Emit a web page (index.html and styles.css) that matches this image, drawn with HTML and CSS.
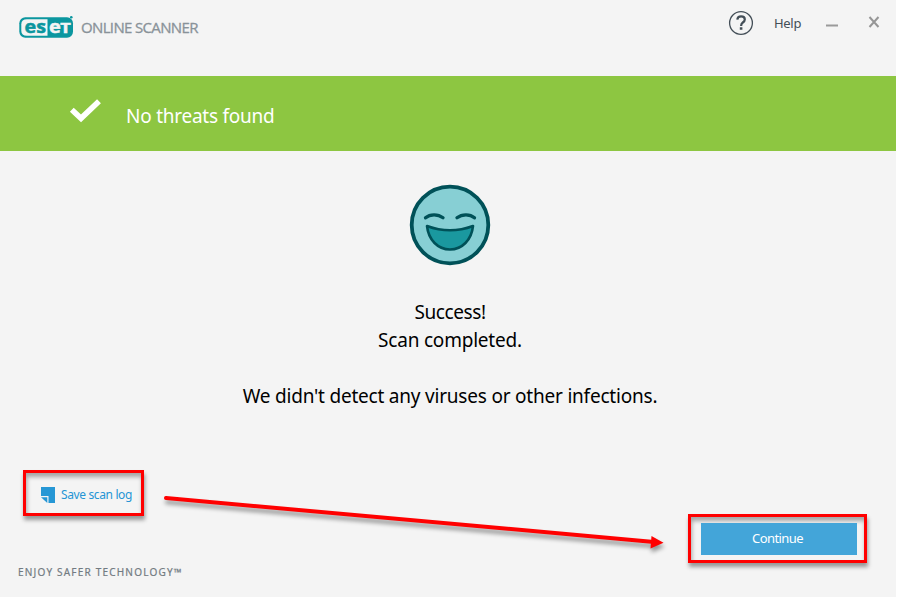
FILE: index.html
```html
<!DOCTYPE html>
<html lang="en">
<head>
<meta charset="utf-8">
<title>ESET Online Scanner</title>
<link rel="stylesheet" href="styles.css">
</head>
<body>
<div class="window">
  <header class="header">
    <svg class="logo" width="56" height="24" viewBox="0 0 56 24" role="img" aria-label="ESET">
      <rect x="0.300" y="2.300" width="53.700" height="20.400" rx="6" fill="#0b969f"/>
      <path d="M8 4.300h20.500v16.400H8q-5.700 0-5.700-5V9.300q0-5 5.700-5z" fill="#f4f4f4"/>
      <circle cx="52.300" cy="2.200" r="1.300" fill="#0b969f"/>
      <text class="logo-text dark" x="5.500" y="17.500" textLength="21.500" lengthAdjust="spacingAndGlyphs">es</text>
      <text class="logo-text light" x="30" y="17.500" textLength="11.800" lengthAdjust="spacingAndGlyphs">e</text>
      <text class="logo-text logo-cap light" x="41.300" y="17.500" textLength="10.500" lengthAdjust="spacingAndGlyphs">T</text>
    </svg>
    <span class="product">ONLINE SCANNER</span>
    <svg class="help-icon" width="26" height="26" viewBox="0 0 26 26" fill="none" stroke="#434e57">
      <circle cx="13" cy="13" r="11.400" stroke-width="1.300"/>
      <path d="M9.300 9.700C9.500 7.300 11 6.300 13.100 6.300c2.200 0 3.700 1.200 3.700 3.100 0 1.500-.9 2.300-2 3.100-1.200.9-1.700 1.600-1.700 3.400" stroke-width="2.200"/>
      <path d="M11.800 18.500h2.600" stroke-width="2.500"/>
    </svg>
    <span class="help">Help</span>
    <svg class="minimize" width="12" height="12" viewBox="0 0 12 12"><path d="M0 10.500h12" stroke="#9a9a9a" stroke-width="2"/></svg>
    <svg class="close" width="12" height="12" viewBox="0 0 12 12"><path d="M1.500 1l9 10M10.500 1l-9 10" stroke="#969696" stroke-width="2"/></svg>
  </header>

  <section class="banner">
    <svg class="check" width="32" height="26" viewBox="0 0 32 26"><path d="M2.800 11.800L12 20.300 30 3.200" fill="none" stroke="#fff" stroke-width="5.600"/></svg>
    <span class="banner-text">No threats found</span>
  </section>

  <main class="result">
    <svg class="face" width="82" height="82" viewBox="0 0 82 82" fill="none" stroke="#005158" stroke-linecap="round" stroke-linejoin="round">
      <circle cx="41" cy="41" r="38.300" fill="#87cfd4" stroke-width="3.800"/>
      <path d="M16.500 33.800C21 29.800 29 29.800 34 33.800M48 33.800C53 29.800 61 29.800 65.500 33.800" stroke-width="3.300"/>
      <path d="M18 42q23 8.500 46 0C62.500 56 53 65.500 41 65.500S19.500 56 18 42z" fill="#1a989f" stroke-width="2.600"/>
    </svg>
    <p class="line success">Success!</p>
    <p class="line completed">Scan completed.</p>
    <p class="line detail">We didn't detect any viruses or other infections.</p>
  </main>

  <div class="actions">
    <div class="highlight save-box">
      <svg width="14" height="16" viewBox="0 0 14 16"><path d="M0 0h14v16H7.500V9H0z" fill="#2697d5"/><path d="M0 10.200h6.300V16z" fill="#2697d5"/></svg>
      <a class="save-link">Save scan log</a>
    </div>
    <div class="highlight continue-box">
      <button class="continue"><span class="continue-label">Continue</span></button>
    </div>
  </div>

  <footer class="footer"><span class="tagline">ENJOY SAFER TECHNOLOGY™</span></footer>

  <svg class="arrow" width="510" height="70" viewBox="0 0 510 70">
    <path d="M6 8L494 52" stroke="#f00" stroke-width="4" stroke-linecap="round"/>
    <path d="M491.500 46L503.500 52.800 490.500 58.500z" fill="#f00"/>
  </svg>
</div>
</body>
</html>
```
FILE: styles.css
```css
* { box-sizing: border-box; }

body {
  margin: 0;
  background: #fff;
  font-family: "Noto Sans", "Open Sans", sans-serif;
}

.window {
  position: relative;
  width: 896px;
  height: 597px;
  background: #f4f4f4;
}

.header {
  display: flex;
  align-items: flex-start;
  height: 76px;
  padding-left: 19px;
  white-space: nowrap;
}

.logo { margin-top: 15px; flex: none; }

.logo-text {
  font: bold 18px "Open Sans", sans-serif;
  stroke-width: 0.5px;
}

.logo-cap { font-size: 14px; }
.dark { fill: #0b969f; stroke: #0b969f; }
.light { fill: #f4f4f4; stroke: #f4f4f4; }

.product {
  width: 119px;
  margin: 17px 0 0 6px;
  font: 15px/21px "Open Sans", sans-serif;
  letter-spacing: -0.65px;
  color: #899299;
  -webkit-text-stroke: 0.3px #899299;
}

.help-icon { margin: 10px 0 0 528px; flex: none; }

.help {
  width: 28px;
  margin: 14px 0 0 20px;
  font-size: 13px;
  line-height: 19px;
  letter-spacing: -0.3px;
  color: #434e57;
}

.minimize { margin: 15px 0 0 24px; flex: none; }
.close { margin: 16px 0 0 30px; flex: none; }

.banner {
  display: flex;
  height: 75px;
  padding-left: 69px;
  background: #8dc641;
}

.check { margin-top: 22px; }

.banner-text {
  margin: 26px 0 0 25px;
  font-size: 19px;
  line-height: 28px;
  letter-spacing: -0.25px;
  color: #fff;
}

.result {
  display: flex;
  flex-direction: column;
  align-items: center;
  height: 319px;
  padding: 33px 0 0 4px;
}

.face { flex: none; margin-bottom: 32px; }

.line {
  margin: 0;
  font-size: 19px;
  line-height: 28px;
  letter-spacing: -0.21px;
  color: #000;
  white-space: nowrap;
}

.success { letter-spacing: -0.4px; }

.detail { margin-top: 28px; }

.actions {
  display: flex;
  justify-content: space-between;
  height: 93px;
  padding: 0 29px 0 23px;
}

.highlight {
  border: 3px solid #f00;
  box-shadow: 1px 4px 4px rgba(0, 0, 0, 0.38), inset 1px 4px 4px rgba(0, 0, 0, 0.32);
}

.save-box {
  display: flex;
  align-items: center;
  gap: 6px;
  width: 121px;
  height: 46px;
  padding: 4px 0 0 15px;
}

.save-link {
  font-size: 12px;
  line-height: 18px;
  letter-spacing: -0.37px;
  white-space: nowrap;
  color: #2594d4;
}

.continue-box {
  align-self: flex-end;
  width: 179px;
  height: 49px;
  padding: 6px 7px 5px 10px;
}

.continue {
  display: block;
  width: 156px;
  height: 32px;
  padding: 0 3px 2px 0;
  border: 0;
  background: #43a5d9;
  color: #fff;
  font: 13px/18px "Noto Sans", sans-serif;
  letter-spacing: -0.6px;
}

.footer {
  padding: 2px 0 0 18px;
  font-size: 10px;
  line-height: 14px;
  letter-spacing: 1.2px;
  color: #727b82;
  -webkit-text-stroke: 0.2px #727b82;
}

.arrow {
  position: absolute;
  left: 160px;
  top: 490px;
  filter: drop-shadow(1px 4px 2px rgba(0, 0, 0, 0.4));
}
```
